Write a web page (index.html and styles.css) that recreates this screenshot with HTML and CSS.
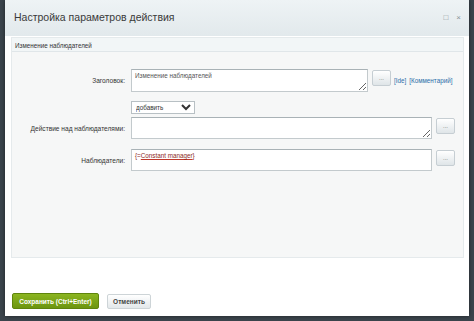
FILE: index.html
```html
<!DOCTYPE html>
<html lang="ru">
<head>
  <meta charset="UTF-8" />
  <title>Настройка параметров действия</title>
  <link rel="stylesheet" href="styles.css">
</head>
<body>
  <div class="dialog">
    <div class="titlebar">
      <span class="title">Настройка параметров действия</span>
      <span class="tools"><span class="tool">□</span><span class="tool">×</span></span>
    </div>
    <div class="content">
      <div class="panel">
        <div class="panel-head">Изменение наблюдателей</div>
        <div class="row row-first">
          <label class="label">Заголовок:</label>
          <div class="field">
            <textarea class="input short">Изменение наблюдателей</textarea>
            <button class="dots">...</button>
            <a class="link" href="#">[Ide]</a>
            <a class="link" href="#">[Комментарий]</a>
          </div>
        </div>
        <div class="row row-select">
          <span class="label"></span>
          <div class="field">
            <select class="select"><option>добавить</option></select>
          </div>
        </div>
        <div class="row row-tight">
          <label class="label">Действие над наблюдателями:</label>
          <div class="field">
            <textarea class="input wide"></textarea>
            <button class="dots">...</button>
          </div>
        </div>
        <div class="row">
          <label class="label">Наблюдатели:</label>
          <div class="field">
            <div class="input wide value">{=<u>Constant manager</u>}</div>
            <button class="dots">...</button>
          </div>
        </div>
      </div>
      <div class="buttons">
        <button class="btn btn-save">Сохранить (Ctrl+Enter)</button>
        <button class="btn btn-cancel">Отменить</button>
      </div>
    </div>
  </div>
</body>
</html>
```

FILE: styles.css
```css
* {
  margin: 0;
  padding: 0;
  box-sizing: border-box;
  font-family: 'Liberation Sans', Arial, sans-serif;
}

body {
  background: #3b444c;
  padding: 0 5px 5px 5px;
  height: 321px;
  overflow: hidden;
}

.dialog {
  background: #fff;
  height: 316px;
  display: flex;
  flex-direction: column;
  box-shadow: 0 0 4px rgba(0, 0, 0, 0.5);
}

.titlebar {
  height: 36px;
  background: linear-gradient(#eef3f5, #e2e9ec);
  display: flex;
  align-items: center;
  justify-content: space-between;
  padding: 0 8px 2px 9px;
}

.title {
  font-size: 10.5px;
  color: #3a3a3a;
}

.tools {
  display: flex;
  gap: 8px;
  color: #8a9499;
  font-size: 8px;
}

.content {
  flex: 1;
  padding: 1px 5px 0 6px;
  display: flex;
  flex-direction: column;
}

.panel {
  height: 221px;
  background: #f6f7f7;
  border: 1px solid #e5eaec;
}

.panel-head {
  height: 14px;
  background: #f2f6f7;
  border-bottom: 1px solid #e0e6e9;
  font-size: 6.3px;
  color: #333;
  padding: 4px 0 0 3px;
}

.row {
  display: flex;
  align-items: center;
  margin-top: 10px;
}

.row-first {
  margin-top: 17px;
}

.row-select {
  margin-top: 9px;
}

.row-tight {
  margin-top: 3px;
}

.label {
  width: 119px;
  flex: none;
  text-align: right;
  padding-right: 6px;
  font-size: 6.6px;
  color: #333;
}

.field {
  display: flex;
  align-items: flex-start;
}

.input {
  display: block;
  height: 23px;
  background: #fff;
  border: 1px solid #c3cacd;
  border-top-color: #a9b2b6;
  font-size: 6.3px;
  color: #555;
  padding: 2px 3px;
  resize: vertical;
  outline: none;
}

.short {
  width: 237px;
}

.wide {
  width: 301px;
  height: 22px;
}

.value {
  color: #8c2a1c;
}

.value u {
  text-decoration-color: #c0392b;
}

.select {
  width: 64px;
  height: 13px;
  font-size: 6.3px;
  border: 1px solid #b8c0c4;
  background: #fff;
  color: #333;
}

.dots {
  width: 19px;
  height: 16px;
  margin: 1px 0 0 4px;
  border: 1px solid #c6ced3;
  border-radius: 2px;
  background: linear-gradient(#ffffff, #dfe5e8);
  font-size: 6px;
  color: #666;
}

.link {
  color: #2b6ea8;
  font-size: 6.3px;
  margin: 8px 0 0 3px;
  text-decoration: none;
}

.buttons {
  display: flex;
  gap: 8px;
  padding: 35px 0 0 1px;
}

.btn {
  height: 16px;
  font-size: 6.5px;
  font-weight: bold;
  border-radius: 2px;
  padding: 0;
  white-space: nowrap;
}

.btn-save {
  width: 87px;
  color: #fff;
  background: linear-gradient(#8bb520, #6c9510);
  border: 1px solid #5f850c;
}

.btn-cancel {
  width: 44px;
  margin-top: 1px;
  height: 15px;
  color: #444;
  background: linear-gradient(#ffffff, #e3e8ea);
  border: 1px solid #cdd4d7;
}
```
